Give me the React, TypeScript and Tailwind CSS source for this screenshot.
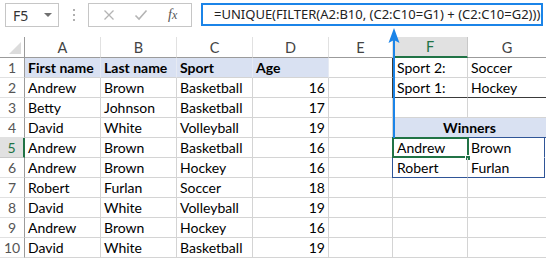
import React from 'react';

const cols = ['A', 'B', 'C', 'D', 'E', 'F', 'G'];

const data: string[][] = [
  ['First name', 'Last name', 'Sport', 'Age'],
  ['Andrew', 'Brown', 'Basketball', '16'],
  ['Betty', 'Johnson', 'Basketball', '17'],
  ['David', 'White', 'Volleyball', '19'],
  ['Andrew', 'Brown', 'Basketball', '16'],
  ['Andrew', 'Brown', 'Hockey', '16'],
  ['Robert', 'Furlan', 'Soccer', '18'],
  ['David', 'White', 'Volleyball', '19'],
  ['Andrew', 'Brown', 'Hockey', '16'],
  ['David', 'White', 'Basketball', '19'],
];

function FormulaBar() {
  return (
    <div className="h-[37px] flex items-start pt-[3px] pl-[5px] font-['Noto_Sans',sans-serif]">
      <div className="w-[54px] h-[24px] shrink-0 border border-[#c6c6c6] flex items-center justify-between pl-[7px] pr-[6px] text-[14px] text-[#333]">
        <span>F5</span>
        <span className="w-0 h-0 border-l-[4px] border-r-[4px] border-t-[4px] border-l-transparent border-r-transparent border-t-[#707070]" />
      </div>
      <div className="w-[29px] h-[24px] shrink-0 flex flex-col items-center justify-center gap-[3px]">
        <span className="w-[2px] h-[2px] bg-[#b0b0b0]" />
        <span className="w-[2px] h-[2px] bg-[#b0b0b0]" />
        <span className="w-[2px] h-[2px] bg-[#b0b0b0]" />
      </div>
      <div className="w-[104px] h-[24px] shrink-0 border border-[#c6c6c6] flex items-center justify-around px-[4px]">
        <svg width="12" height="12" viewBox="0 0 12 12">
          <path d="M1.5 1.5 L10.5 10.5 M10.5 1.5 L1.5 10.5" stroke="#b4b4b4" strokeWidth="1.3" fill="none" />
        </svg>
        <svg width="14" height="12" viewBox="0 0 14 12">
          <path d="M1.5 6.5 L5 10 L12.5 1.5" stroke="#b4b4b4" strokeWidth="1.6" fill="none" />
        </svg>
        <span className="font-['Liberation_Serif',serif] italic text-[14px] text-[#555] leading-none">
          f<span className="text-[12px]">x</span>
        </span>
      </div>
      <div className="ml-[9px] w-[342px] h-[23px] shrink-0 border-2 border-[#1b84e8] flex items-center pl-[11px] text-[13px] text-[#222] whitespace-nowrap overflow-hidden">
        =UNIQUE(FILTER(A2:B10, (C2:C10=G1) + (C2:C10=G2)))
      </div>
    </div>
  );
}

export default function App() {
  const cellBase =
    'h-[20px] border-r border-b border-[#d4d4d4] px-[3px] flex items-center text-[14px] text-black leading-none whitespace-nowrap';

  const renderRow = (r: number) => {
    const row = data[r - 1];
    const cells: React.ReactNode[] = [];
    const selected = r === 5;
    cells.push(
      <div
        key={`h${r}`}
        className={`h-[20px] border-b flex items-center justify-center text-[14px] ${
          selected
            ? 'bg-[#e1e1e1] text-[#217346] border-r-2 border-r-[#217346] border-b-[#c8c8c8]'
            : 'bg-white text-[#555] border-r border-r-[#9b9b9b] border-b-[#e1e1e1]'
        }`}
      >
        {r}
      </div>
    );
    row.forEach((text, i) => {
      const header = r === 1;
      cells.push(
        <div
          key={`c${r}-${i}`}
          className={`${cellBase} ${header ? 'bg-[#d9e1f2] font-bold border-r-[#e6eaf3]' : ''} ${
            i === 3 && !header ? 'justify-end' : ''
          }`}
        >
          {text}
        </div>
      );
    });
    // E
    cells.push(<div key={`e${r}`} className={cellBase} />);
    // F & G
    if (r === 1 || r === 2) {
      const f = r === 1 ? 'Sport 2:' : 'Sport 1:';
      const g = r === 1 ? 'Soccer' : 'Hockey';
      const bottom = r === 2 ? 'border-b-[#3a3a3a]' : '';
      cells.push(
        <div key={`f${r}`} className={`${cellBase} ${bottom} border-l border-l-[#3a3a3a] -ml-[1px] pl-[4px]`}>
          {f}
        </div>
      );
      cells.push(
        <div key={`g${r}`} className={`${cellBase} ${bottom} border-r-0`}>
          {g}
        </div>
      );
    } else if (r === 4) {
      cells.push(
        <div
          key={`fg${r}`}
          className={`${cellBase} col-span-2 justify-center bg-[#d9e1f2] font-bold border-r-0 border-b-[#2f5597]`}
        >
          Winners
        </div>
      );
    } else if (r === 5 || r === 6) {
      const f = r === 5 ? 'Andrew' : 'Robert';
      const g = r === 5 ? 'Brown' : 'Furlan';
      const bottom = r === 6 ? 'border-b-[#2f5597]' : 'border-b-white';
      cells.push(
        <div key={`f${r}`} className={`${cellBase} ${bottom} border-l border-l-[#2f5597] -ml-[1px] pl-[4px] relative`}>
          {f}
          {r === 5 && (
            <>
              <span className="absolute -left-[1px] -top-[1px] w-[77px] h-[21px] border-2 border-[#217346]" />
              <span className="absolute right-[-4px] bottom-[-4px] w-[6px] h-[6px] bg-[#217346] border border-white" />
            </>
          )}
        </div>
      );
      cells.push(
        <div key={`g${r}`} className={`${cellBase} ${bottom} border-r border-r-[#2f5597] w-[77px]`}>
          {g}
        </div>
      );
    } else {
      cells.push(<div key={`f${r}`} className={cellBase} />);
      cells.push(<div key={`g${r}`} className={`${cellBase} border-r-0`} />);
    }
    return cells;
  };

  return (
    <div className="w-[546px] h-[258px] bg-white relative overflow-hidden font-['Lato',sans-serif]">
      <FormulaBar />
      <div className="grid grid-cols-[25px_76px_76px_76px_76px_64px_75px_78px]">
        {/* corner */}
        <div className="h-[21px] border-r border-r-[#9b9b9b] border-b border-b-[#9b9b9b] flex items-end justify-end pr-[3px] pb-[3px]">
          <svg width="12" height="12" viewBox="0 0 12 12">
            <path d="M12 0 L12 12 L0 12 Z" fill="#dcdcdc" />
          </svg>
        </div>
        {cols.map((c) =>
          c === 'F' ? (
            <div
              key={c}
              className="h-[21px] bg-[#e1e1e1] border-r border-r-[#c8c8c8] border-b-2 border-b-[#217346] flex items-center justify-center text-[14.5px] text-[#217346] pt-[1px]"
            >
              {c}
            </div>
          ) : (
            <div
              key={c}
              className={`h-[21px] border-r border-r-[#e1e1e1] border-b border-b-[#9b9b9b] flex items-center justify-center text-[14.5px] text-[#444] pt-[1px] ${
                c === 'G' ? 'border-r-0' : ''
              }`}
            >
              {c}
            </div>
          )
        )}
        {data.map((_, i) => renderRow(i + 1))}
      </div>
      {/* arrow pointing from the spill range up to the formula */}
      <svg className="absolute left-[388px] top-[27px]" width="12" height="112" viewBox="0 0 12 112">
        <path d="M6 1 L11.5 16 L6 13 L0.5 16 Z" fill="#1b84e8" />
        <rect x="5" y="12" width="2" height="99" fill="#1b84e8" />
      </svg>
    </div>
  );
}
